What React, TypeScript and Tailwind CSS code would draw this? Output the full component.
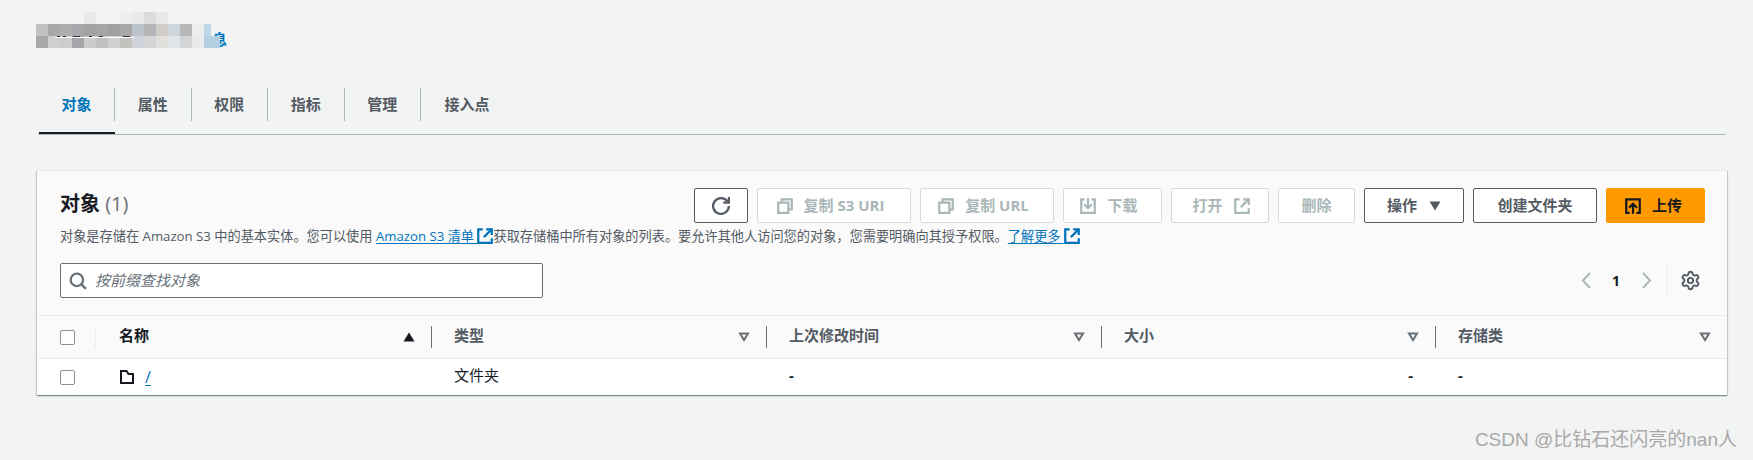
import React from 'react';
import { Settings } from 'lucide-react';

const FONT = "font-['Open_Sans','Noto_Sans_CJK_SC',sans-serif]";

const Icon: React.FC<{ className?: string; children: React.ReactNode }> = ({ className = 'w-[18px] h-[18px]', children }) => (
  <svg viewBox="0 0 16 16" fill="none" stroke="currentColor" strokeWidth={2} className={`shrink-0 ${className}`}>
    {children}
  </svg>
);

const CopyIcon = () => (
  <Icon>
    <path d="M2 5h9v9H2z" />
    <path d="M5 5V2h9v9h-3" />
  </Icon>
);

const DownloadIcon = () => (
  <Icon>
    <path d="M5 2H2v12h12V2h-3" />
    <path d="M8 1v9" />
    <path d="M4.5 6.5 8 10l3.5-3.5" />
  </Icon>
);

const ExternalIcon: React.FC<{ className?: string }> = ({ className }) => (
  <Icon className={className}>
    <path d="M6 2H2v12h12v-4" />
    <path d="M9 2h5v5" />
    <path d="M14 2 7 9" />
  </Icon>
);

const UploadIcon = () => (
  <Icon>
    <path d="M5 14H2V2h12v12h-3" />
    <path d="M8 15V6" />
    <path d="M4.5 9.5 8 6l3.5 3.5" />
  </Icon>
);

const Caret: React.FC<{ kind?: 'down' | 'up' | 'hollow'; className?: string }> = ({ kind = 'down', className = '' }) => (
  <svg viewBox="0 0 12 10" className={`w-[12px] h-[10px] shrink-0 ${className}`}>
    {kind === 'hollow' && <path d="M2 1.5h8L6 8z" fill="none" stroke="currentColor" strokeWidth={2} />}
    {kind === 'down' && <path d="M0.5 0.5h11L6 9.5z" fill="currentColor" />}
    {kind === 'up' && <path d="M0.5 9.5h11L6 0.5z" fill="currentColor" />}
  </svg>
);

const Checkbox = () => <span className="block w-[15px] h-[15px] border border-[#879596] rounded-[2px] bg-white" />;

const tabs = ['对象', '属性', '权限', '指标', '管理', '接入点'];

const rowOne = [
  'bg-[#c0c1c0]', 'bg-[#a9a9a9]', 'bg-[#aeaeae]', 'bg-[#a5a7ab]', 'bg-[#a2a2a3]', 'bg-[#a6a6a7]', 'bg-[#a0a0a2]',
  'bg-[#a9a7a5]', 'bg-[#bcc3ca]', 'bg-[#b4b5b6]', 'bg-[#d0ccc8]', 'bg-[#cfd5dc]', 'bg-[#b8b8b9]', 'bg-[#eceeee]',
];

const rowTwo = [
  'bg-[#a8a8a8]', 'bg-[#cfcfd2]', 'bg-[#cdcdcf]', 'bg-[#a5a5a9]', 'bg-[#cccccc]', 'bg-[#c2c2c4]', 'bg-[#d0d0d2]',
  'bg-[#c2c2bf]', 'bg-[#d0d3d9]', 'bg-[#d5d6d8]', 'bg-[#e2e0dd]', 'bg-[#e0e5e8]', 'bg-[#d3d4d6]', 'bg-[#e8eaec]',
];

// blurred bucket name from the original capture
const Mosaic = () => (
  <div className="absolute left-[36px] top-[12px] w-[184px]">
    <div className="flex h-[12px]">
      <div className="w-[48px]" />
      <div className="w-[12px] bg-[#e8e9ea]" />
      <div className="w-[24px]" />
      <div className="w-[12px] bg-[#eeeeec]" />
      <div className="w-[12px] bg-[#e9eaea]" />
      <div className="w-[12px] bg-[#dcdcdc]" />
      <div className="w-[12px] bg-[#e8e8e6]" />
    </div>
    <div className="flex h-[12px]">
      {rowOne.map((c, i) => (
        <div key={i} className={`w-[12px] ${c}`} />
      ))}
      <div className="w-[7px] bg-[#bdd8e8]" />
    </div>
    <div className="flex h-[12px]">
      {rowTwo.map((c, i) => (
        <div key={i} className={`w-[12px] ${c}`} />
      ))}
      <div className="w-[16px] bg-[#b3d0e3]" />
    </div>
    <div className="absolute left-[19px] top-[25px] w-[79px] h-px bg-white" />
    <div className="absolute left-[21px] top-[24px] flex h-px">
      <span className="w-[3px] bg-[#33302e]" />
      <span className="ml-[3px] w-[3px] bg-[#33302e]" />
      <span className="ml-[7px] w-[7px] bg-[#33302e]" />
      <span className="ml-[9px] w-[3px] bg-[#33302e]" />
      <span className="ml-[7px] w-[4px] bg-[#33302e]" />
      <span className="ml-[20px] w-[7px] bg-[#33302e]" />
    </div>
  </div>
);

const btnBase = 'h-[35px] rounded-[2px] border flex items-center justify-center text-[15px] font-bold';
const btnOff = `${btnBase} bg-white border-[#d5dbdb] text-[#aab7b8]`;
const btnOn = `${btnBase} bg-white border-[#545b64] text-[#545b64]`;

const columns = ['类型', '上次修改时间', '大小'];

const App: React.FC = () => {
  return (
    <div className={`relative w-full h-[460px] overflow-hidden bg-[#f2f3f3] ${FONT}`}>
      <Mosaic />

      {/* Heading */}
      <div className="h-[88px] pt-[27px] pl-[212px]">
        <a className="text-[15px] leading-[20px] font-bold text-[#0073bb]">息</a>
      </div>

      {/* Tabs */}
      <div className="ml-[38px] mr-[27px] pl-px flex border-b border-[#aab7b8]">
        {tabs.map((tab, i) => (
          <div
            key={tab}
            className={`h-[46px] ${i === tabs.length - 1 ? 'w-[92px]' : i === 0 ? 'w-[76px]' : 'w-[76.5px]'} ${
              i === 0 ? 'border-b-2 border-[#16191f]' : ''
            }`}
          >
            <div
              className={`h-[33px] flex items-center justify-center text-[15px] font-bold ${
                i === 0 ? 'text-[#0073bb]' : 'text-[#545b64]'
              } ${i < tabs.length - 1 ? 'border-r border-[#aab7b8]' : ''}`}
            >
              {tab}
            </div>
          </div>
        ))}
      </div>

      {/* Objects card */}
      <div className="mt-[35px] ml-[37px] w-[1690px] bg-white border-t border-[#eaeded] shadow-[0_1px_1px_0_rgba(0,28,36,0.3),1px_1px_1px_0_rgba(0,28,36,0.15),-1px_1px_1px_0_rgba(0,28,36,0.15)]">
        <div className="bg-[#fafafa] border-b border-[#eaeded] pt-[17px] pb-[17px] pl-[23px] pr-[22px]">
          <div className="flex items-center justify-between h-[35px]">
            <h2 className="mb-[4px] text-[20px] font-bold text-[#16191f]">
              对象 <span className="font-normal text-[#687078]">(1)</span>
            </h2>
            <div className="flex gap-[9px]">
              <button className={`${btnOn} w-[54px]`}>
                <Icon className="w-[18px] h-[18px]">
                  <path d="M10 5h5V0" />
                  <path d="M15 8a7 7 0 1 1-1.2-3.9" />
                </Icon>
              </button>
              <button className={`${btnOff} w-[154px] gap-[10px] pr-[8px]`}>
                <CopyIcon />
                复制 S3 URI
              </button>
              <button className={`${btnOff} w-[134px] gap-[10px] pr-[8px]`}>
                <CopyIcon />
                复制 URL
              </button>
              <button className={`${btnOff} w-[99px] gap-[10px] pr-[8px]`}>
                <DownloadIcon />
                下载
              </button>
              <button className={`${btnOff} w-[98px] gap-[10px] pl-[3px]`}>
                打开
                <ExternalIcon className="w-[18px] h-[18px]" />
              </button>
              <button className={`${btnOff} w-[77px]`}>删除</button>
              <button className={`${btnOn} w-[100px] gap-[12px]`}>
                操作
                <Caret />
              </button>
              <button className={`${btnOn} w-[124px]`}>创建文件夹</button>
              <button className={`${btnBase} w-[99px] gap-[10px] pr-[5px] bg-[#ff9900] border-[#ff9900] text-[#16191f]`}>
                <UploadIcon />
                上传
              </button>
            </div>
          </div>

          <p className="mt-[4px] h-[18px] flex items-center text-[13.2px] leading-[18px] text-[#545b64] whitespace-nowrap">
            对象是存储在 Amazon S3 中的基本实体。您可以使用&nbsp;
            <a className="text-[#0073bb] underline underline-offset-2">Amazon S3 清单&nbsp;</a>
            <ExternalIcon className="w-[18px] h-[18px] -mx-px text-[#0073bb]" />
            获取存储桶中所有对象的列表。要允许其他人访问您的对象，您需要明确向其授予权限。
            <a className="text-[#0073bb] underline underline-offset-2">了解更多&nbsp;</a>
            <ExternalIcon className="w-[18px] h-[18px] -mx-px text-[#0073bb]" />
          </p>

          <div className="mt-[18px] flex items-center justify-between">
            <div className="w-[483px] h-[35px] flex items-center gap-[8px] pl-[8px] bg-white border border-[#687078] rounded-[2px]">
              <svg viewBox="0 0 16 16" fill="none" stroke="#687078" strokeWidth={2} className="w-[18px] h-[18px] shrink-0">
                <circle cx="7" cy="7" r="5.5" />
                <path d="M11 11l4 4" />
              </svg>
              <span className="text-[15px] italic text-[#687078]">按前缀查找对象</span>
            </div>
            <div className="flex items-center h-[35px] pr-[4px]">
              <svg viewBox="0 0 10 17" fill="none" stroke="#aab7b8" strokeWidth={2} className="w-[10px] h-[17px]">
                <path d="M9 1 2 8.5 9 16" />
              </svg>
              <span className="w-[51px] pr-px text-center text-[14px] font-bold text-[#16191f]">1</span>
              <svg viewBox="0 0 10 17" fill="none" stroke="#aab7b8" strokeWidth={2} className="w-[10px] h-[17px]">
                <path d="M1 1 8 8.5 1 16" />
              </svg>
              <div className="ml-[15px] w-px h-[35px] bg-[#eaeded]" />
              <Settings className="ml-[12px] w-[21px] h-[21px] text-[#545b64]" strokeWidth={2.2} />
            </div>
          </div>
        </div>

        {/* Table head */}
        <div className="grid grid-cols-[59px_336px_335px_335px_334px_1fr] h-[43px] items-center bg-[#fafafa] border-b border-[#eaeded] text-[15px] font-bold text-[#545b64]">
          <div className="h-[22px] pl-[23px] flex items-center border-r border-[#eaeded]">
            <Checkbox />
          </div>
          <div className="h-[22px] pl-[23px] pr-[16px] flex items-center justify-between border-r border-[#687078] text-[#16191f]">
            <span className="mb-[3px]">名称</span>
            <Caret kind="up" />
          </div>
          {columns.map((title) => (
            <div key={title} className="h-[22px] pl-[22px] pr-[16px] flex items-center justify-between border-r border-[#687078]">
              <span className="mb-[3px]">{title}</span>
              <Caret kind="hollow" className="text-[#687078]" />
            </div>
          ))}
          <div className="h-[22px] pl-[22px] pr-[16px] flex items-center justify-between">
            <span className="mb-[3px]">存储类</span>
            <Caret kind="hollow" className="text-[#687078]" />
          </div>
        </div>

        {/* Table row */}
        <div className="grid grid-cols-[59px_336px_335px_335px_334px_1fr] h-[36px] items-center text-[15px] text-[#16191f]">
          <div className="pl-[23px]">
            <Checkbox />
          </div>
          <div className="pl-[23px] flex items-center gap-[10px]">
            <Icon className="w-[16px] h-[16px]">
              <path d="M2 2h5.5l2 3H14v9H2z" />
            </Icon>
            <a className="text-[16px] text-[#0073bb] underline underline-offset-2">/</a>
          </div>
          <div className="pl-[22px] pb-[3px]">文件夹</div>
          <div className="pl-[22px] pb-[3px] font-bold">-</div>
          <div className="pr-[23px] pb-[3px] text-right font-bold">-</div>
          <div className="pl-[22px] pb-[3px] font-bold">-</div>
        </div>
      </div>

      {/* Watermark */}
      <div className="mt-[33px] pr-[16px] text-right text-[19px] leading-[24px] text-[#a9a9a9] font-['Liberation_Sans','Noto_Sans_CJK_SC',sans-serif]">
        CSDN @比钻石还闪亮的nan人
      </div>
    </div>
  );
};

export default App;
